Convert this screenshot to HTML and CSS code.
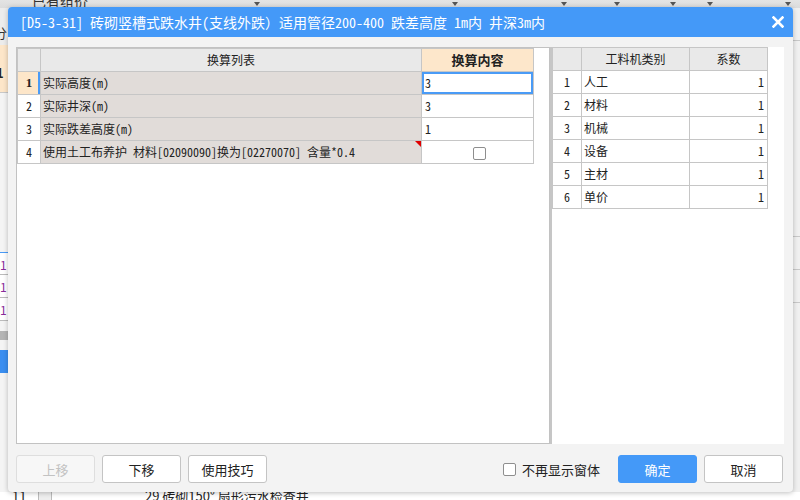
FILE: index.html
```html
<!DOCTYPE html>
<html lang="zh">
<head>
<meta charset="utf-8">
<title>换算</title>
<link rel="stylesheet" href="styles.css">
</head>
<body>
<div class="app">
  <div class="app-top">
    <span class="app-top-text">已有组价</span>
    <span class="tri t1"></span><span class="tri t2"></span><span class="tri t3"></span><span class="tri t4"></span><span class="tri t5"></span><span class="tri t6"></span><span class="tri t7"></span>
  </div>
  <div class="app-left">
    <div class="al-gray"><span class="al-txt">分</span></div>
    <div class="al-peach"><span class="al-mark">1</span></div>
    <div class="al-rows">
      <div class="al-row blue"><span>1</span></div>
      <div class="al-row"><span>1</span></div>
      <div class="al-row"><span>1</span></div>
    </div>
    <div class="al-band"></div>
    <div class="al-blue"></div>
  </div>
  <div class="app-bottom">
    <span class="ab-num">11</span><span class="ab-sep"></span>
    <span class="ab-txt">29 砖砌150° 扇形污水检查井</span>
  </div>
  <div class="app-right">
    <div class="ar-line l1"></div><div class="ar-line l2"></div><div class="ar-line l3"></div><div class="ar-line l4"></div>
  </div>
</div>

<div class="dialog">
  <div class="titlebar">
    <span class="title">[D5-3-31] 砖砌竖槽式跌水井(支线外跌）适用管径200-400 跌差高度 1m内 井深3m内</span>
    <span class="close"><svg width="12" height="12" viewBox="0 0 12 12"><path d="M1.5 1.5 L10.5 10.5 M10.5 1.5 L1.5 10.5" stroke="#fff" stroke-width="2.6" stroke-linecap="square"/></svg></span>
  </div>
  <div class="body">
    <div class="panels">
      <div class="panel-left">
        <table class="grid main">
          <colgroup><col class="c-no"><col class="c-name"><col class="c-val"></colgroup>
          <thead>
            <tr><th class="no"></th><th class="name-h">换算列表</th><th class="val-h">换算内容</th></tr>
          </thead>
          <tbody>
            <tr><td class="no sel">1</td><td class="name">实际高度(m)</td><td class="val active">3</td></tr>
            <tr><td class="no">2</td><td class="name">实际井深(m)</td><td class="val">3</td></tr>
            <tr><td class="no">3</td><td class="name">实际跌差高度(m)</td><td class="val">1</td></tr>
            <tr><td class="no">4</td><td class="name flag">使用土工布养护 材料[02090090]换为[02270070] 含量*0.4</td><td class="val center"><span class="chk"></span></td></tr>
          </tbody>
        </table>
      </div>
      <div class="panel-right">
        <table class="grid side">
          <colgroup><col class="s-no"><col class="s-name"><col class="s-val"></colgroup>
          <thead>
            <tr><th></th><th>工料机类别</th><th>系数</th></tr>
          </thead>
          <tbody>
            <tr><td class="sno">1</td><td>人工</td><td class="num">1</td></tr>
            <tr><td class="sno">2</td><td>材料</td><td class="num">1</td></tr>
            <tr><td class="sno">3</td><td>机械</td><td class="num">1</td></tr>
            <tr><td class="sno">4</td><td>设备</td><td class="num">1</td></tr>
            <tr><td class="sno">5</td><td>主材</td><td class="num">1</td></tr>
            <tr><td class="sno">6</td><td>单价</td><td class="num">1</td></tr>
          </tbody>
        </table>
      </div>
    </div>
    <div class="footer">
      <div class="btn-group">
        <button class="btn" disabled>上移</button>
        <button class="btn">下移</button>
        <button class="btn">使用技巧</button>
      </div>
      <div class="btn-group right">
        <label class="dont-show"><span class="chk"></span>不再显示窗体</label>
        <button class="btn primary">确定</button>
        <button class="btn">取消</button>
      </div>
    </div>
  </div>
</div>
</body>
</html>
```

FILE: styles.css
```css
* { box-sizing: border-box; }
html, body { margin: 0; padding: 0; }
body {
  width: 800px;
  height: 500px;
  overflow: hidden;
  position: relative;
  background: #f2f2f2;
  font-family: "Noto Sans CJK SC", "Noto Sans", sans-serif;
}

/* ---------- application behind the dialog ---------- */
.app { position: absolute; inset: 0; }
.app-top {
  position: absolute; left: 0; top: 0; width: 800px; height: 8px;
  background: linear-gradient(#e4e4e4, #dcdcdc);
  overflow: hidden;
}
.app-top-text {
  position: absolute; left: 32px; top: -9px;
  font-size: 14px; color: #333;
}
.tri {
  position: absolute; top: 2px;
  width: 0; height: 0;
  border-left: 3px solid transparent; border-right: 3px solid transparent;
  border-top: 4px solid #555;
}
.t1 { left: 254px; } .t2 { left: 452px; } .t3 { left: 561px; } .t4 { left: 614px; }
.t5 { left: 670px; } .t6 { left: 707px; } .t7 { left: 785px; }

.app-left {
  position: absolute; left: 0; top: 8px; width: 8px; height: 484px;
  background: #f4f4f4;
  overflow: hidden;
}
.al-gray { height: 37px; background: #ececec; position: relative; }
.al-txt { position: absolute; left: -6px; top: 15px; font-size: 13px; color: #333; }
.al-peach { height: 48px; background: #fde6c9; border-bottom: 1px solid #c8c8c8; position: relative; }
.al-mark { position: absolute; left: -4px; top: 18px; font-size: 13px; font-weight: bold; color: #222; }
.al-rows { margin-top: 159px; }
.al-row { height: 23px; border-bottom: 1px solid #bbb; position: relative; background: #fff; }
.al-row.blue { border-top: 1px solid #4a9bf6; }
.al-row span { position: absolute; left: 0; top: 3px; font-size: 12px; color: #8a2a9a; }
.al-band { height: 9px; margin-top: 10px; background: #b4b4b4; }
.al-blue { height: 23px; margin-top: 10px; background: #3a8ef0; }

.app-bottom {
  position: absolute; left: 0; top: 492px; width: 800px; height: 8px;
  background: #fff; overflow: hidden;
}
.ab-num { position: absolute; left: 12px; top: -6px; font-size: 13px; color: #222; }
.ab-sep { position: absolute; left: 38px; top: 0; width: 14px; height: 8px; border-left: 1px solid #bbb; border-right: 1px solid #bbb; background: #eee; }
.ab-txt { position: absolute; left: 145px; top: -6px; font-size: 13px; color: #222; }

.app-right {
  position: absolute; left: 793px; top: 8px; width: 7px; height: 484px;
  background: #f0f0f0;
}
.ar-line { position: absolute; left: 0; width: 7px; height: 1px; background: #c8c8c8; }
.ar-line.l1 { top: 32px; } .ar-line.l2 { top: 228px; } .ar-line.l3 { top: 261px; } .ar-line.l4 { top: 294px; }

/* ---------- dialog ---------- */
.dialog {
  position: absolute; left: 8px; top: 7px;
  width: 785px; height: 485px;
  background: #f3f3f3;
  border-radius: 4px;
  box-shadow: 0 1px 5px rgba(0,0,0,0.25);
  display: flex; flex-direction: column;
  overflow: hidden;
}
.titlebar {
  height: 30px; flex: none;
  background: #4499f8;
  color: #fff;
  display: flex; align-items: center; justify-content: space-between;
  padding: 0 9px 0 12px;
}
.title {
  font-family: "Noto Sans Mono CJK SC", "Noto Sans CJK SC", monospace;
  font-size: 14px; line-height: 30px; white-space: nowrap;
}
.close { display: flex; align-items: center; width: 12px; height: 12px; }

.body {
  flex: 1;
  display: flex; flex-direction: column;
  padding: 10px 9px 0 8px;
}
.panels { display: flex; height: 397px; flex: none; }
.panel-left {
  width: 534px;
  background: #fff;
  border: 1px solid #c2c2c2;
}
.panel-right {
  flex: 1;
  background: #fff;
  border-left: 2px solid #c6c6c6;
}

/* grids */
.grid {
  border-collapse: collapse;
  table-layout: fixed;
  font-family: "Noto Sans Mono CJK SC", "Noto Sans CJK SC", monospace;
  font-size: 12px;
  color: #222;
}
.grid th, .grid td {
  border: 1px solid #c6c6c6;
  height: 23px;
  padding: 0 0 0 2px;
  white-space: nowrap;
  overflow: hidden;
  line-height: 20px;
}
.grid th { background: #e9e9e9; font-weight: normal; text-align: center; padding: 0; }

.main { width: 516px; }
.main .c-no { width: 23px; }
.main .c-name { width: 381px; }
.main .c-val { width: 112px; }
.main td.no { text-align: center; padding: 0; background: #fff; }
.main td.no.sel {
  background: #fde6c9;
  font-family: "Liberation Serif", serif;
  font-weight: bold; font-size: 13px;
  box-shadow: inset -2px 0 0 #4a9bf6;
}
.main td.name { background: #e1dcd9; position: relative; }
.main td.name.flag::after {
  content: ""; position: absolute; right: 0; top: 0;
  border-top: 6px solid #e00000; border-left: 6px solid transparent;
}
.main th.val-h { background: #fde7cb; font-weight: bold; font-size: 13px; }
.main td.val { padding-left: 3px; background: #fff; }
.main td.val.active { box-shadow: inset 0 0 0 2px #4a9bf6; }
.main td.val.center { text-align: center; }

.chk {
  display: inline-block; vertical-align: middle;
  width: 13px; height: 13px;
  border: 1px solid #8e8e8e; border-radius: 2px;
  background: #fff;
}

.side { width: 215px; }
.side .s-no { width: 29px; }
.side .s-name { width: 108px; }
.side .s-val { width: 78px; }
.side td.sno { text-align: center; padding: 0; }
.side td.num { text-align: right; padding-right: 3px; }

/* footer */
.footer {
  display: flex; justify-content: space-between; align-items: center;
  margin-top: 11px; padding-right: 1px;
}
.btn-group { display: flex; gap: 7px; align-items: center; }
.btn {
  width: 79px; height: 28px;
  background: #fff;
  border: 1px solid #c4c4c4;
  border-radius: 3px;
  font-family: "Noto Sans CJK SC", sans-serif;
  font-size: 13px; color: #222;
  padding: 0;
}
.btn:disabled { background: #f7f7f7; border-color: #dedede; color: #c2c2c2; }
.btn.primary { background: #4499f8; border-color: #4499f8; color: #fff; }
.dont-show {
  display: flex; align-items: center; gap: 6px;
  font-size: 13px; color: #222;
  margin-right: 11px;
}
```
